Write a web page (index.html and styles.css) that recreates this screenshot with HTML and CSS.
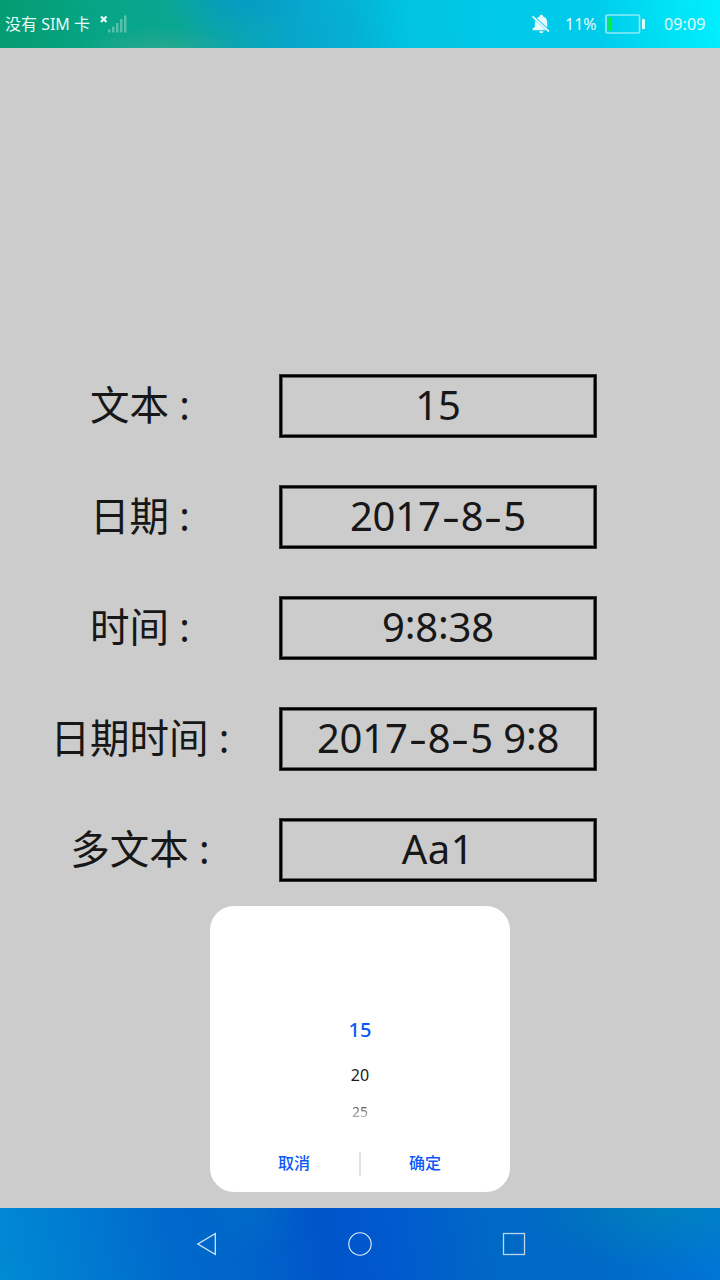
FILE: index.html
```html
<!DOCTYPE html>
<html lang="zh-CN">
<head>
<meta charset="utf-8">
<title>选择器</title>
<link rel="stylesheet" href="styles.css">
</head>
<body>
<div class="screen">
  <header class="status">
    <span class="carrier">没有 SIM 卡</span>
    <svg class="signal" width="28" height="20" viewBox="0 0 28 20">
      <path d="M1 2.500l5.500 5.500M6.500 2.500l-5.500 5.500" stroke="#e2f8f3" stroke-width="2.300"/>
      <g fill="#54c1aa"><rect x="8" y="15.500" width="2.500" height="3"/><rect x="12" y="12.500" width="2.500" height="6"/><rect x="16" y="9" width="2.500" height="9.500"/><rect x="20" y="5" width="2.500" height="13.500"/><rect x="24" y="1.500" width="2.500" height="17"/></g>
    </svg>
    <svg class="bell" width="20" height="20" viewBox="0 0 20 20">
      <path fill="#e5fafd" d="M6 4.200C7 3.300 7.800 3 8.600 2.800V1.900a2 2 0 0 1 3.600 0v.9c2.800.7 4 2.900 4 5.700v4.900zM4.300 6.200L14.900 16.300H1.500v-1.300l2.400-2.500V8.700c0-.9.100-1.700.4-2.500zM8 17.200h4.500q-.3 2-2.200 2T8 17.200z"/>
      <path d="M1.500 2.300l16.500 15.200" stroke="#e5fafd" stroke-width="1.700"/>
    </svg>
    <span class="percent">11%</span>
    <svg class="battery" width="42" height="20" viewBox="0 0 42 20">
      <rect x="1" y="1" width="33.500" height="18" rx="1.500" fill="none" stroke="#8fe9f8" stroke-width="1.700"/>
      <rect x="3.500" y="3.500" width="3.500" height="13" fill="#08f51b"/>
      <rect x="37" y="5" width="3" height="10" rx=".6" fill="#e0fbff"/>
    </svg>
    <span class="clock">09:09</span>
  </header>

  <main class="content">
    <div class="form">
      <div class="row"><div class="label">文本 :</div><div class="field">15</div></div>
      <div class="row"><div class="label">日期 :</div><div class="field">2017<i class="dash">-</i>8<i class="dash">-</i>5</div></div>
      <div class="row"><div class="label">时间 :</div><div class="field">9<i class="colon">:</i>8<i class="colon">:</i>38</div></div>
      <div class="row"><div class="label">日期时间 :</div><div class="field">2017<i class="dash">-</i>8<i class="dash">-</i>5 9<i class="colon">:</i>8</div></div>
      <div class="row"><div class="label">多文本 :</div><div class="field field-text">Aa1</div></div>
    </div>
    <section class="dialog">
      <div class="picker">
        <div class="option selected">15</div>
        <div class="option near">20</div>
        <div class="option far">25</div>
      </div>
      <div class="actions">
        <div class="action cancel">取消</div>
        <div class="divider"></div>
        <div class="action confirm">确定</div>
      </div>
    </section>
  </main>

  <nav class="navbar">
    <svg width="24" height="24" viewBox="0 0 24 24"><path d="M3.800 12L21.300 1.500v21z" fill="none" stroke="#e3effa" stroke-width="1.200"/></svg>
    <svg width="24" height="24" viewBox="0 0 24 24"><circle cx="12" cy="12" r="11.200" fill="none" stroke="#e3effa" stroke-width="1.100"/></svg>
    <svg width="24" height="24" viewBox="0 0 24 24"><rect x="1.500" y="1.500" width="21" height="21" fill="none" stroke="#b9d9f2" stroke-width="1.300"/></svg>
  </nav>
</div>
</body>
</html>
```
FILE: styles.css
```css
* { box-sizing: border-box; }
body {
  margin: 0;
  font-family: "Noto Sans", "Noto Sans CJK SC", sans-serif;
}
svg { display: block; flex: none; }
.screen {
  width: 720px;
  height: 1280px;
  display: flex;
  flex-direction: column;
  overflow: hidden;
  background: #ccc;
}
.status {
  height: 48px;
  flex: none;
  display: flex;
  align-items: center;
  padding: 0 14px 0 5px;
  color: #e5faf9;
  font-size: 16px;
  line-height: 24px;
  white-space: nowrap;
  background:
    radial-gradient(ellipse 80px 24px at 160px 50px, rgba(70, 170, 145, .5), transparent),
    radial-gradient(ellipse 70px 34px at 240px 0, rgba(0, 148, 205, .5), transparent),
    linear-gradient(80deg, #049b70 0, #06a585 100px, #09a790 170px, #0aa4ae 225px, #07a6ca 290px, #04b0d4 350px, #00c4e1 405px, #00c9e8 500px, #00cbea 590px, #00e1f5 660px, #00f0ff 720px);
}
.carrier { width: 95px; }
.bell { margin-left: auto; margin-right: 14px; }
.percent { width: 40px; }
.battery { margin-right: 17px; }
.clock { width: 42px; letter-spacing: .1px; }
.content {
  flex: 1;
  display: flex;
  flex-direction: column;
  align-items: center;
  padding-top: 326px;
}
.form {
  width: 720px;
  display: flex;
  flex-direction: column;
  gap: 47px;
}
.row {
  display: flex;
  height: 64px;
  color: #171717;
}
.label {
  width: 279px;
  padding-left: 1px;
  text-align: center;
  font-size: 39.500px;
  line-height: 62px;
  white-space: pre;
}
.field {
  width: 318px;
  height: 64px;
  border: 1px solid #333;
  box-shadow: inset 0 0 0 2px #000, inset 0 0 0 3px #666;
  text-align: center;
  font-size: 40px;
  line-height: 60px;
  letter-spacing: -.2px;
  white-space: nowrap;
}
.field-text { letter-spacing: .6px; }
.dash, .colon { font-style: normal; display: inline-block; line-height: 1; }
.dash { width: 20px; transform: scaleX(1.400); }
.colon { transform: translateY(-3px); }
.dialog {
  width: 300px;
  height: 286px;
  margin-top: 24px;
  padding-top: 104px;
  border-radius: 24px;
  background: #fff;
}
.picker {
  height: 129px;
  display: flex;
  flex-direction: column;
  text-align: center;
}
.selected { height: 40px; font-size: 20px; line-height: 40px; font-weight: 500; color: #0a59f7; }
.near { height: 42px; padding-top: 5px; font-size: 16px; line-height: 40px; color: #1a1a1a; }
.far {
  height: 40px;
  font-size: 14px;
  line-height: 40px;
  color: transparent;
  background: linear-gradient(#555 14px, #bbb 27px);
  background-clip: text;
}
.actions {
  height: 50px;
  display: flex;
  align-items: center;
  padding: 0 18px;
}
.action {
  width: 131px;
  flex: none;
  text-align: center;
  font-size: 16px;
  line-height: 24px;
  padding-bottom: 2px;
  font-weight: 500;
  color: #0a59f7;
}
.cancel { padding-left: 1px; }
.confirm { padding-right: 3px; }
.divider { width: 2px; height: 24px; background: #e3e3e3; }
.navbar {
  height: 72px;
  flex: none;
  display: flex;
  justify-content: center;
  align-items: center;
  gap: 130px;
  background:
    radial-gradient(ellipse 140px 60px at 660px 0, rgba(0, 142, 172, .5), transparent),
    radial-gradient(ellipse 50px 50px at 255px 0, rgba(0, 122, 195, .35), transparent),
    linear-gradient(80deg, #008ad4 0, #007ad0 90px, #0068cb 180px, #0065ca 240px, #0054c9 330px, #005bce 400px, #0068c5 490px, #0069c6 590px, #0077d7 720px);
}
```
